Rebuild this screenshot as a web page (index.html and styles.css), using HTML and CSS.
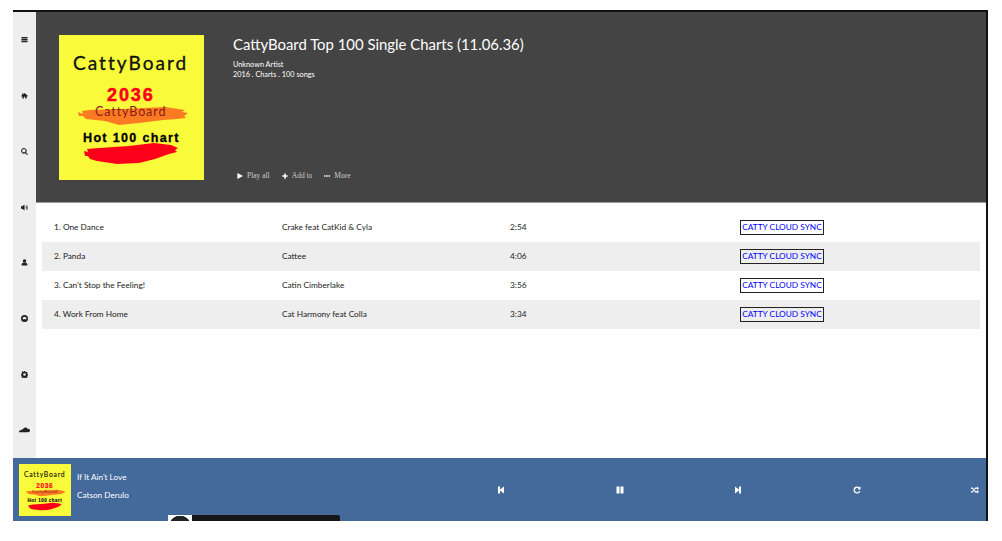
FILE: index.html
```html
<!DOCTYPE html>
<html lang="en">
    <head>
        <meta charset="UTF-8">
        <meta name="viewport" content="width=device-width, initial-scale=1.0">
        <title>CattyBoard</title>

        <link rel="stylesheet" href="styles.css">

    </head>
    <body>
        <div class="frame">
            <div class="main">
                <nav class="sidebar">
                    <svg class="icon" viewBox="0 0 16 16"><path d="M1 2h14v3H1zM1 6.500h14v3H1zM1 11h14v3H1z"/></svg>
                    <svg class="icon" viewBox="0 0 16 16"><path d="M8 2 L16 9 L14 10 L13 9.500 V15 H9.500 V11 H6.500 V15 H3 V9.500 L2 10 L0 9 L3 6.500 V3 H5 V5Z"/></svg>
                    <svg class="icon" viewBox="0 0 16 16"><path fill-rule="evenodd" d="M6.500 0a6.500 6.500 0 0 1 5.200 10.400l4 4-1.800 1.800-4-4A6.500 6.500 0 1 1 6.500 0zm0 2.500a4 4 0 1 0 0 8 4 4 0 0 0 0-8z"/></svg>
                    <svg class="icon" viewBox="0 0 16 16"><path d="M0 5h3l5-4v14l-5-4H0zM9.500 5.500c1.300 1 1.300 4 0 5zM11.500 3.500c2.400 2 2.400 7 0 9l-.6-1c1.500-1.600 1.500-5.400 0-7zM13.500 2c3.300 3 3.300 9 0 12l-.7-.8c2.600-2.800 2.600-7.600 0-10.400z"/></svg>
                    <svg class="icon" viewBox="0 0 16 16"><circle cx="8" cy="4.500" r="4"/><path d="M1.500 15v-2.500C1.500 10 4 8.500 5.500 8.500h5c1.500 0 4 1.500 4 4V15z"/></svg>
                    <svg class="icon" viewBox="0 0 16 16"><path fill-rule="evenodd" d="M8 0a8 8 0 1 1 0 16A8 8 0 0 1 8 0zM4 6l3-2 4 1 2 3-2 2-2-1-3 1-2-1z"/></svg>
                    <svg class="icon" viewBox="0 0 16 16"><path fill-rule="evenodd" d="M6.500 0h3l.4 2.200 1.400.6L13.200 1.500l2.100 2.100-1.300 1.900.6 1.400 2.200.4v3l-2.200.4-.6 1.400 1.300 1.900-2.100 2.100-1.900-1.300-1.400.6-.4 2.200h-3l-.4-2.200-1.400-.6-1.900 1.300-2.100-2.100 1.300-1.900-.6-1.400L-.200 9.400v-3l2.200-.4.600-1.400-1.300-1.900 2.100-2.100 1.900 1.300 1.400-.6zM8 5a3 3 0 1 0 0 6 3 3 0 0 0 0-6z"/></svg>
                    <svg class="icon cloud" viewBox="0 0 20 10"><path d="M10 1c2.500-1.500 5 0 5.500 2 2-.5 4.500.5 4.500 3 0 2-1.500 3-3.500 3H0V8c0-1 1-2 2.500-2L4 4.500 6 4l1.500-1.500z"/></svg>
                </nav>

                <div class="content">
                    <header class="album">
                        <svg class="album-cover" viewBox="0 0 145 145">
                            <rect width="145" height="145" fill="#f9fb3a"/>
                            <path d="M19 77 L24 79 L23 76 L30 75 L62 74 L106 72 L126 75 L123 77 L129 78 L125 81 L127 83 L118 84 L104 85 L80 88 L60 90 L46 86 L27 84 L24 81 L20 81 Z" fill="#fb7a22"/>
                            <path d="M25 116 L29 117 L28 114 L40 113 L70 111 L95 108 L112 110 L119 113 L116 115 L118 117 L110 119 L96 124 L80 128 L58 129 L38 126 L31 124 L29 121 L26 121 Z" fill="#fd0019"/>
                            <text class="art-title" x="14" y="35">CattyBoard</text>
                            <text class="art-year" x="48" y="66">2036</text>
                            <text class="art-sub" x="36" y="81">CattyBoard</text>
                            <text class="art-hot" x="24" y="107">Hot 100 chart</text>
                        </svg>
                        <div class="album-info">
                            <h1>CattyBoard Top 100 Single Charts (11.06.36)</h1>
                            <p>Unknown Artist</p>
                            <p>2016 . Charts . 100 songs</p>
                            <div class="actions">
                                <span><svg class="action-icon" viewBox="0 0 16 16"><path d="M1 0 L16 8 L1 16Z"/></svg>Play all</span>
                                <span><svg class="action-icon" viewBox="0 0 16 16"><path d="M6 1h4v5h5v4h-5v5H6v-5H1V6h5z"/></svg>Add to</span>
                                <span><svg class="action-icon" viewBox="0 0 16 16"><path d="M0 6h4v4H0zM6 6h4v4H6zM12 6h4v4h-4z"/></svg>More</span>
                            </div>
                        </div>
                    </header>

                    <section class="songs">
                        <div class="song">
                            <span>1. One Dance</span>
                            <span>Crake feat CatKid &amp; Cyla</span>
                            <span>2:54</span>
                            <span><a class="sync" href="#">CATTY CLOUD SYNC</a></span>
                        </div>
                        <div class="song">
                            <span>2. Panda</span>
                            <span>Cattee</span>
                            <span>4:06</span>
                            <span><a class="sync" href="#">CATTY CLOUD SYNC</a></span>
                        </div>
                        <div class="song">
                            <span>3. Can't Stop the Feeling!</span>
                            <span>Catin Cimberlake</span>
                            <span>3:56</span>
                            <span><a class="sync" href="#">CATTY CLOUD SYNC</a></span>
                        </div>
                        <div class="song">
                            <span>4. Work From Home</span>
                            <span>Cat Harmony feat Colla</span>
                            <span>3:34</span>
                            <span><a class="sync" href="#">CATTY CLOUD SYNC</a></span>
                        </div>
                    </section>
                </div>
            </div>

            <footer class="player">
                <svg class="player-cover" viewBox="0 0 145 145">
                    <rect width="145" height="145" fill="#f9fb3a"/>
                    <path d="M19 77 L30 75 L62 74 L106 72 L126 75 L129 78 L118 84 L104 85 L80 88 L60 90 L46 86 L27 84 Z" fill="#fb7a22"/>
                    <path d="M25 116 L40 113 L70 111 L95 108 L112 110 L119 113 L110 119 L96 124 L80 128 L58 129 L38 126 L31 124 Z" fill="#fd0019"/>
                    <text class="art-title" x="14" y="35">CattyBoard</text>
                    <text class="art-year" x="48" y="66">2036</text>
                    <text class="art-sub" x="36" y="81">CattyBoard</text>
                    <text class="art-hot" x="24" y="107">Hot 100 chart</text>
                </svg>
                <div class="now-playing">
                    <span>If It Ain't Love</span>
                    <span>Catson Derulo</span>
                </div>
                <div class="controls">
                    <svg class="control" viewBox="0 0 16 16"><path d="M2 1h4v6l8-6v14L6 9v6H2z"/></svg>
                    <svg class="control" viewBox="0 0 16 16"><path d="M1 1h6v14H1zM9 1h6v14H9z"/></svg>
                    <svg class="control" viewBox="0 0 16 16"><path d="M14 1h-4v6L2 1v14l8-6v6h4z"/></svg>
                    <svg class="control" viewBox="0 0 16 16"><path d="M8 1a7 7 0 0 1 4.600 1.700L15 1v6H9l2-2.100A4.300 4.300 0 1 0 12.200 10h2.700A7 7 0 1 1 8 1z"/></svg>
                    <svg class="control" viewBox="0 0 16 16"><path d="M0 3h3.500l6 7.500H12V8l4 3.500L12 15v-2H8.500l-6-7.500H0zM0 10.500h2.500l1.500-1.800 1.500 1.900L3.500 13H0zM8.500 3H12V1l4 3.500L12 8V5.500H9.500L8 7.300 6.500 5.400z"/></svg>
                </div>
                <div class="popup">
                    <div class="popup-thumb"></div>
                </div>
            </footer>
        </div>
    </body>
</html>
```

FILE: styles.css
```css
* {
    box-sizing: border-box;
}

body {
    margin: 0;
    font-family: "Lato", sans-serif;
    color: #222;
    background-color: #fff;
}

.frame {
    display: flex;
    flex-direction: column;
    overflow: hidden;
    position: relative;
    width: 975px;
    height: 511px;
    margin: 10px 0 0 13px;
    border-top: 2px solid #111;
    border-right: 2px solid #111;
}

.main {
    display: flex;
    flex: 1;
    min-height: 0;
}

.sidebar {
    display: flex;
    flex-direction: column;
    justify-content: space-around;
    align-items: center;
    width: 23px;
    padding-bottom: 1px;
    background-color: #eee;
}

.icon {
    width: 7px;
    height: 7px;
    fill: #222;
}

.cloud {
    width: 11px;
    height: 6px;
}

.content {
    flex: 1;
    min-width: 0;
}

.album {
    display: flex;
    height: 191px;
    padding: 23px 0 0 23px;
    color: #fff;
    background-color: #444;
    border-bottom: 1px solid #999;
}

.album-cover {
    flex: none;
    width: 145px;
    height: 145px;
}

.album-info {
    display: flex;
    flex-direction: column;
    height: 145px;
    margin-left: 29px;
}

.album-info h1 {
    margin: -1px 0 6px;
    font-size: 14.900px;
    font-weight: 400;
    line-height: 20px;
}

.album-info p {
    margin: 0;
    font-size: 7.300px;
    line-height: 10px;
}

.actions {
    display: flex;
    gap: 12px;
    margin-top: auto;
    margin-bottom: -1px;
    padding-left: 4px;
    font-family: "Liberation Serif", serif;
    font-size: 7.500px;
    line-height: 10px;
    color: #ccc;
}

.actions span {
    display: flex;
    align-items: center;
}

.action-icon {
    width: 6px;
    height: 6px;
    margin-right: 4px;
    fill: #fff;
}

.songs {
    padding: 10px 6px 0;
}

.song {
    display: grid;
    grid-template-columns: 228px 228px 230px 1fr;
    align-items: center;
    height: 29px;
    padding-left: 12px;
    padding-bottom: 2px;
    font-size: 8.300px;
}

.song:nth-child(even) {
    background-color: #eee;
}

.sync {
    display: block;
    width: 84px;
    height: 15px;
    margin-top: 2px;
    font-size: 8.300px;
    line-height: 13px;
    text-align: center;
    text-decoration: none;
    color: #00f;
    border: 1px solid #222;
}

.player {
    display: flex;
    align-items: center;
    flex: none;
    position: relative;
    height: 63px;
    padding: 0 6px;
    color: #fff;
    background-color: #44699b;
}

.player-cover {
    flex: none;
    width: 52px;
    height: 52px;
}

.now-playing {
    display: flex;
    flex-direction: column;
    gap: 8px;
    margin-left: 6px;
    margin-bottom: 7px;
    font-size: 8.200px;
    line-height: 10px;
}

.controls {
    display: flex;
    justify-content: space-between;
    align-items: center;
    width: 482px;
    margin-left: auto;
    margin-right: 1px;
}

.control {
    width: 8px;
    height: 8px;
    fill: #fff;
}

.popup {
    position: absolute;
    top: 57px;
    left: 155px;
    width: 172px;
    height: 40px;
    padding-right: 148px;
    background-color: #161616;
    border-radius: 2px;
}

.popup-thumb {
    height: 100%;
    background-color: #fff;
    background-image: radial-gradient(circle at 12px 12px, #222 11px, #fff 11.500px);
}

.art-title {
    font-family: "Lato", sans-serif;
    font-size: 19px;
    letter-spacing: 2.050px;
    fill: #111;
    stroke: #111;
    stroke-width: .3;
}

.art-year {
    font-family: "Liberation Sans", sans-serif;
    font-size: 18px;
    font-weight: 700;
    letter-spacing: 1.900px;
    fill: #fd0019;
    stroke: #fd0019;
    stroke-width: .5;
}

.art-sub {
    font-family: "Lato", sans-serif;
    font-size: 12.500px;
    letter-spacing: .9px;
    fill: #8a1a1a;
}

.art-hot {
    font-family: "Liberation Sans", sans-serif;
    font-size: 12.500px;
    font-weight: 700;
    letter-spacing: 1.350px;
    fill: #000;
    stroke: #000;
    stroke-width: .3;
}
```
